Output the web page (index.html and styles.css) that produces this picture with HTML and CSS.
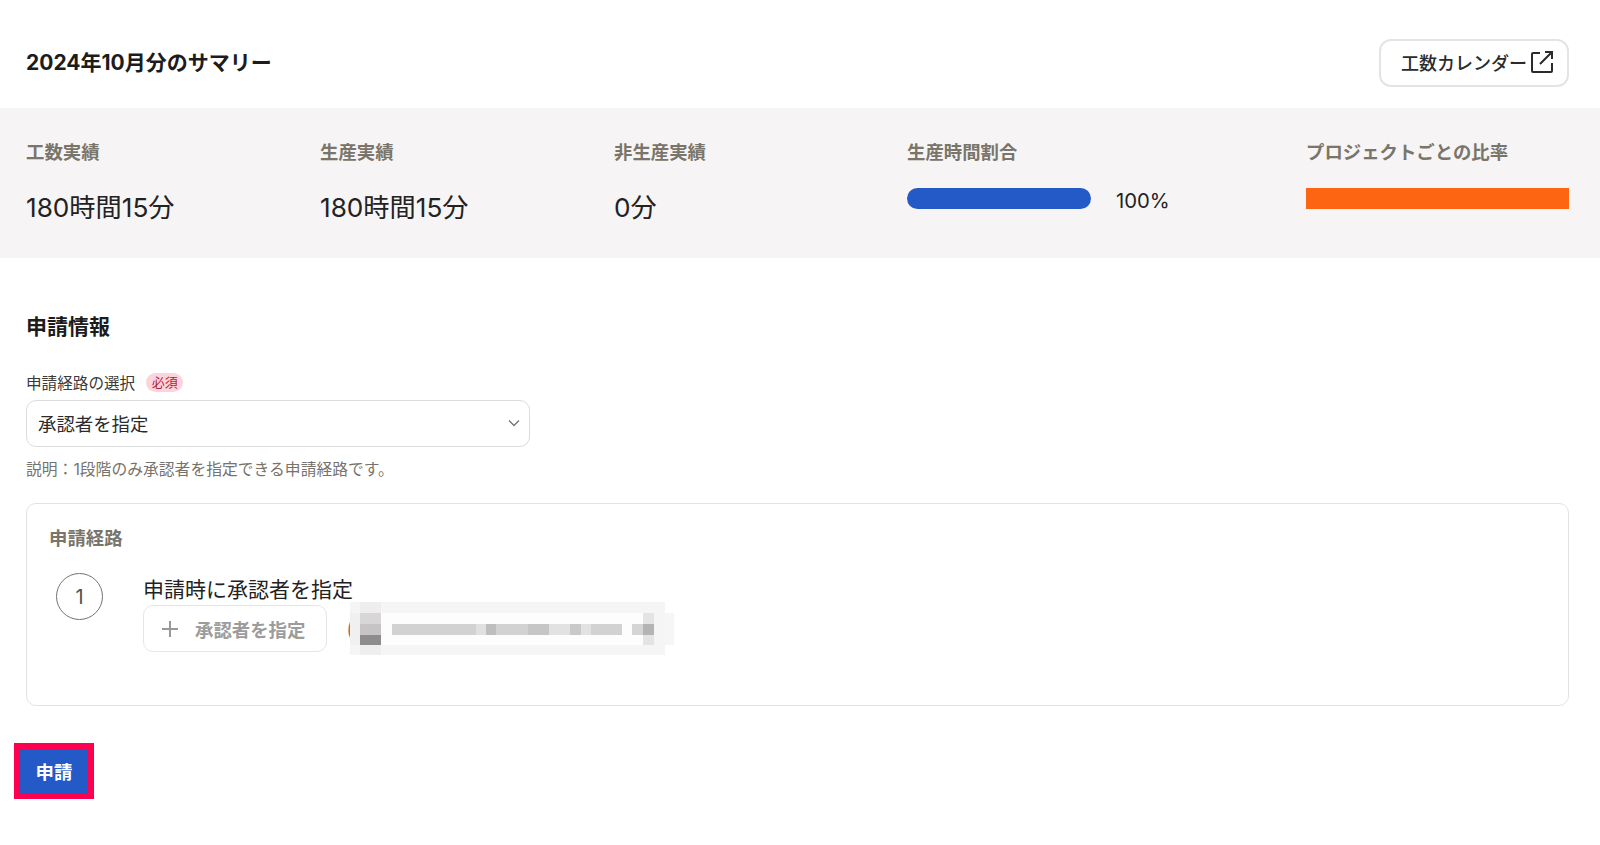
FILE: index.html
```html
<!DOCTYPE html>
<html lang="ja">
<head>
<meta charset="utf-8">
<title>サマリー</title>
<link rel="stylesheet" href="styles.css">
</head>
<body>
<header class="head">
  <h1 class="title">2024年10月分のサマリー</h1>
  <a class="cal-btn">工数カレンダー<svg class="ext" width="24" height="24" viewBox="0 0 24 24" fill="none" stroke="#2b2b2b" stroke-width="2"><path d="M10 3H3a1 1 0 0 0-1 1v17a1 1 0 0 0 1 1h18a1 1 0 0 0 1-1v-8"/><path d="M10 14 22 2M15 2h7v7"/></svg></a>
</header>
<section class="summary">
  <div class="stat"><div class="stat-label">工数実績</div><div class="stat-value">180時間15分</div></div>
  <div class="stat"><div class="stat-label">生産実績</div><div class="stat-value">180時間15分</div></div>
  <div class="stat"><div class="stat-label">非生産実績</div><div class="stat-value">0分</div></div>
  <div class="stat"><div class="stat-label">生産時間割合</div><div class="ratio"><div class="bar-blue"></div><span class="pct">100%</span></div></div>
  <div class="stat"><div class="stat-label">プロジェクトごとの比率</div><div class="bar-orange"></div></div>
</section>
<main class="form">
  <h2 class="sec-title">申請情報</h2>
  <div class="field-label"><span>申請経路の選択</span><span class="req">必須</span></div>
  <div class="select"><span>承認者を指定</span><svg width="12" height="8" viewBox="0 0 12 8" fill="none" stroke="#77736a" stroke-width="1.3"><path d="M1 1.5 6 6.5 11 1.5"/></svg></div>
  <p class="help">説明：1段階のみ承認者を指定できる申請経路です。</p>
  <div class="route">
    <div class="route-title">申請経路</div>
    <div class="step">
      <div class="num">1</div>
      <div class="step-body">
        <div class="step-name">申請時に承認者を指定</div>
        <div class="step-row">
          <div class="add"><svg width="18" height="18" viewBox="0 0 18 18" stroke="#999" stroke-width="2"><path d="M9 1v16M1 9h16"/></svg><span>承認者を指定</span></div>
          <span class="paren">(</span>
          <svg class="mosaic" width="330" height="54" viewBox="0 0 330 54">
            <rect x="0" y="0" width="315" height="53" fill="#f5f5f5"/>
            <rect x="315" y="11" width="9" height="32" fill="#f6f6f6"/>
            <rect x="21" y="11" width="274" height="32" fill="#fdfdfd"/>
            <rect x="0" y="11" width="10" height="32" fill="#f0f0f0"/>
            <rect x="10" y="0" width="21" height="11" fill="#eeeeee"/>
            <rect x="10" y="11" width="21" height="11" fill="#d9d6d8"/>
            <rect x="10" y="22" width="21" height="11" fill="#c6c4c5"/>
            <rect x="10" y="33" width="21" height="10" fill="#8f8c8e"/>
            <rect x="10" y="43" width="21" height="10" fill="#eeeeee"/>
            <rect x="42" y="22" width="230" height="11" fill="#d2d2d2"/>
            <rect x="126" y="22" width="10" height="11" fill="#e0e0e0"/>
            <rect x="136" y="22" width="10" height="11" fill="#bebebe"/>
            <rect x="178" y="22" width="21" height="11" fill="#c6c6c6"/>
            <rect x="199" y="22" width="21" height="11" fill="#e2e2e2"/>
            <rect x="220" y="22" width="11" height="11" fill="#c9c9c9"/>
            <rect x="231" y="22" width="10" height="11" fill="#e2e2e2"/>
            <rect x="282" y="22" width="11" height="11" fill="#d5d5d5"/>
            <rect x="293" y="11" width="11" height="32" fill="#e4e4e4"/>
            <rect x="293" y="22" width="11" height="11" fill="#b4b4b4"/>
          </svg>
        </div>
      </div>
    </div>
  </div>
  <div class="submit-frame"><button class="submit">申請</button></div>
</main>
</body>
</html>
```
FILE: styles.css
```css
* { box-sizing: border-box; }
html, body { margin: 0; padding: 0; }
body {
  background: #fff;
  color: #1f1f1f;
  font-family: Inter, "Noto Sans CJK JP", sans-serif;
  overflow: hidden;
}
.head {
  height: 108px;
  padding: 39px 31px 21px 26px;
  display: flex;
  justify-content: space-between;
  align-items: center;
}
.title { margin: 0 0 4px; font-size: 21px; font-weight: 700; color: #1c1c1c; }
.cal-btn {
  width: 190px;
  height: 48px;
  border: 2px solid #e4e4e4;
  border-radius: 12px;
  display: flex;
  align-items: center;
  justify-content: flex-end;
  padding: 0 13px 2px 0;
  font-size: 18px;
  font-weight: 500;
  color: #2b2b2b;
}
.ext { margin-left: 3px; }
.summary {
  height: 150px;
  background: #f6f4f5;
  padding: 32px 31px 0 26px;
  display: grid;
  grid-template-columns: 294px 294px 293px 399px 1fr;
}
.stat-label { font-size: 18.4px; font-weight: 700; line-height: 24px; color: #79756a; }
.stat-value { margin-top: 26px; font-size: 26.2px; line-height: 36px; color: #222; }
.ratio { margin-top: 24px; display: flex; align-items: flex-start; }
.bar-blue { width: 184px; height: 21px; border-radius: 11px; background: #2459c8; }
.pct { margin-left: 25px; font-size: 20.3px; line-height: 26px; color: #222; }
.bar-orange { margin-top: 24px; height: 21px; background: #fe6512; }
.form { padding: 0 31px 0 26px; }
.sec-title { margin: 54px 0 0; font-size: 21px; line-height: 30px; font-weight: 700; color: #1c1c1c; }
.field-label { margin-top: 31px; display: flex; align-items: center; font-size: 15.6px; line-height: 22px; color: #3a3a3a; }
.req {
  margin: -3px 0 0 11px;
  width: 37px;
  height: 19px;
  border-radius: 10px;
  background: #fbd5db;
  color: #b3203c;
  font-size: 13px;
  line-height: 19px;
  text-align: center;
}
.select {
  margin-top: 5px;
  width: 504px;
  height: 47px;
  border: 1px solid #dcdcdc;
  border-radius: 10px;
  padding: 0 9px 2px 11px;
  display: flex;
  align-items: center;
  justify-content: space-between;
  font-size: 18.4px;
  color: #2b2b2b;
}
.help { margin: 12px 0 0; font-size: 15.8px; line-height: 22px; color: #77736a; }
.route {
  margin-top: 22px;
  height: 203px;
  border: 1px solid #e2e2e2;
  border-radius: 10px;
  padding: 22px 22px 0;
}
.route-title { font-size: 18.4px; font-weight: 700; line-height: 24px; color: #79756a; }
.step { margin-top: 23px; display: flex; padding-left: 7px; }
.num {
  width: 47px;
  height: 47px;
  border: 1px solid #77736a;
  border-radius: 50%;
  display: flex;
  align-items: center;
  justify-content: center;
  font-size: 20px;
  color: #55524a;
}
.step-body { margin: 2px 0 0 40px; }
.step-name { font-size: 21px; line-height: 30px; color: #222; }
.step-row { display: flex; align-items: center; position: relative; }
.add {
  width: 184px;
  height: 47px;
  border: 1px solid #e6e6e6;
  border-radius: 10px;
  display: flex;
  align-items: center;
  padding-left: 17px;
  font-size: 18.4px;
  font-weight: 700;
  color: #9c9c9c;
}
.add span { margin-left: 16px; }
.paren { margin-left: 19px; font-size: 22px; font-weight: 300; color: #77736a; opacity: 0.99; }
.mosaic { position: absolute; left: 207px; top: -3px; }
.submit-frame {
  margin: 37px 0 0 -12px;
  width: 80px;
  height: 56px;
  border: 6px solid #ff0050;
  background: #2459c8;
}
.submit {
  width: 100%;
  height: 100%;
  border: 0;
  padding: 0;
  background: #2459c8;
  color: #fff;
  font-family: inherit;
  font-size: 18.4px;
  font-weight: 700;
}
```
